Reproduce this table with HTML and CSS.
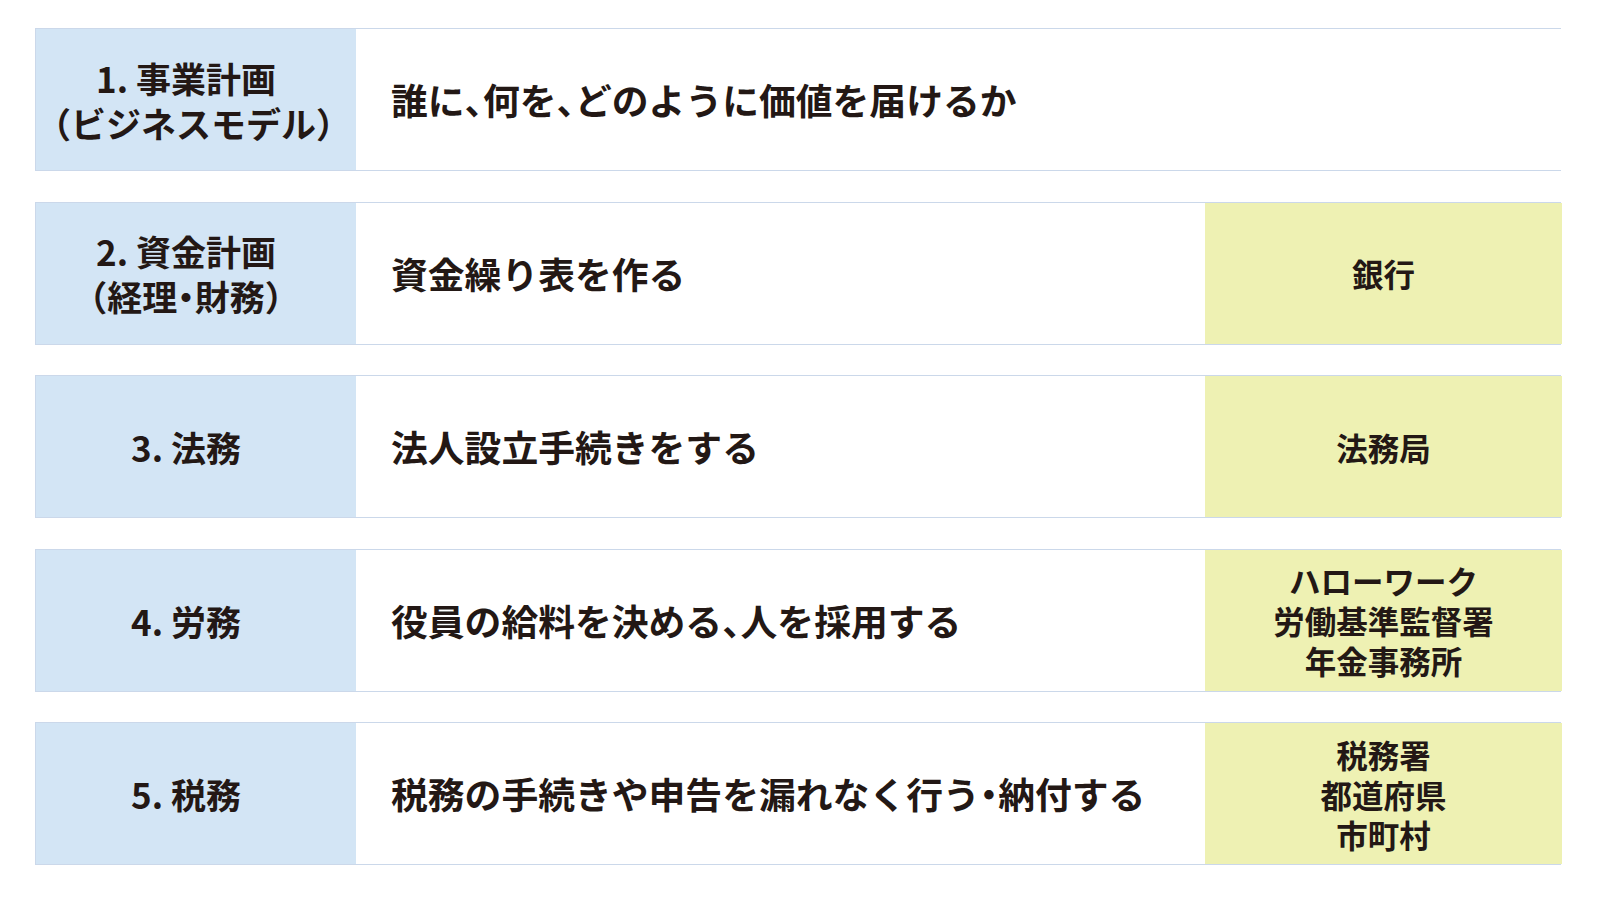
FILE: index.html
```html
<!DOCTYPE html>
<html lang="ja">
<head>
<meta charset="utf-8">
<title>起業に必要な手続き</title>
<link rel="stylesheet" href="styles.css">
</head>
<body>
<div class="table">
  <div class="row">
    <div class="cat"><p class="t">1. 事業計画<br>（ビジネスモデル）</p></div>
    <div class="desc wide"><p class="t">誰に<span class="p">、</span>何を<span class="p">、</span>どのように価値を届けるか</p></div>
  </div>
  <div class="row">
    <div class="cat"><p class="t">2. 資金計画<br>（経理<span class="p">・</span>財務）</p></div>
    <div class="desc"><p class="t">資金繰り表を作る</p></div>
    <div class="org"><p class="t">銀行</p></div>
  </div>
  <div class="row">
    <div class="cat"><p class="t">3. 法務</p></div>
    <div class="desc"><p class="t">法人設立手続きをする</p></div>
    <div class="org"><p class="t">法務局</p></div>
  </div>
  <div class="row">
    <div class="cat"><p class="t">4. 労務</p></div>
    <div class="desc"><p class="t">役員の給料を決める<span class="p">、</span>人を採用する</p></div>
    <div class="org"><p class="t">ハローワーク<br>労働基準監督署<br>年金事務所</p></div>
  </div>
  <div class="row">
    <div class="cat"><p class="t">5. 税務</p></div>
    <div class="desc"><p class="t">税務の手続きや申告を漏れなく行う<span class="p">・</span>納付する</p></div>
    <div class="org"><p class="t">税務署<br>都道府県<br>市町村</p></div>
  </div>
</div>
</body>
</html>
```
FILE: styles.css
```css
html, body {
  margin: 0;
  padding: 0;
  background: #ffffff;
}
body {
  font-family: "Noto Sans CJK JP", "Noto Sans", sans-serif;
  font-weight: 700;
  color: #231815;
}
.t {
  margin: 0;
}
.table {
  display: flex;
  flex-direction: column;
  gap: 30.5px;
  padding: 28px 0 0 35px;
  width: 1526px;
}
.row {
  display: grid;
  grid-template-columns: 320px 849px 357px;
  height: 143px;
  box-sizing: border-box;
  border: 1px solid #cbd8ea;
}
.cat {
  background: #d3e5f5;
  display: flex;
  align-items: center;
  justify-content: center;
  text-align: center;
  font-size: 35px;
  line-height: 45px;
  padding-right: 20px;
}
.desc {
  background: #ffffff;
  display: flex;
  align-items: center;
  padding-left: 35px;
  font-size: 36.8px;
  line-height: 1.2;
}
.desc.wide {
  grid-column: 2 / 4;
}
.p {
  font-feature-settings: "halt";
}
.org {
  background: #eef1b3;
  display: flex;
  align-items: center;
  justify-content: center;
  text-align: center;
  font-size: 31.5px;
  line-height: 40px;
}
```
